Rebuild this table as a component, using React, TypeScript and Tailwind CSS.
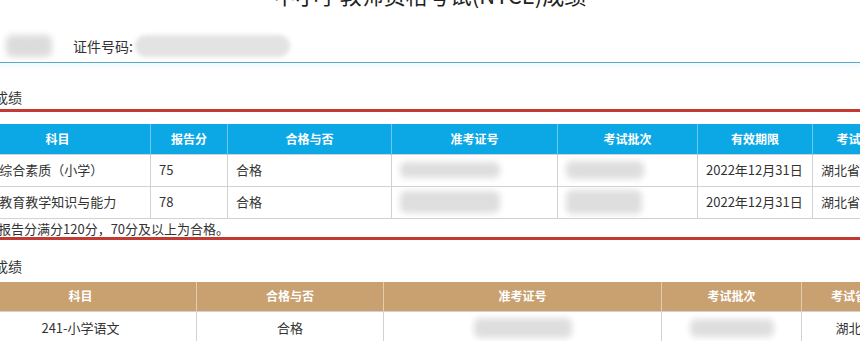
import React from "react";

type Cell = { text?: string; blur?: string };

const writtenCols = [186, 77, 164, 166, 140, 115, 96];
const writtenHead = ["科目", "报告分", "合格与否", "准考证号", "考试批次", "有效期限", "考试省份"];
const writtenRows: Cell[][] = [
  [
    { text: "201-综合素质（小学）" },
    { text: "75" },
    { text: "合格" },
    { blur: "w-[100px] h-[16px]" },
    { blur: "w-[78px] h-[18px]" },
    { text: "2022年12月31日" },
    { text: "湖北省" },
  ],
  [
    { text: "202-教育教学知识与能力" },
    { text: "78" },
    { text: "合格" },
    { blur: "w-[100px] h-[22px]" },
    { blur: "w-[76px] h-[24px]" },
    { text: "2022年12月31日" },
    { text: "湖北省" },
  ],
];

const interviewCols = [232, 187, 278, 140, 107];
const interviewHead = ["科目", "合格与否", "准考证号", "考试批次", "考试省份"];
const interviewRow: Cell[] = [
  { text: "241-小学语文" },
  { text: "合格" },
  { blur: "w-[98px] h-[20px]" },
  { blur: "w-[84px] h-[18px]" },
  { text: "湖北省" },
];

function Blurred({ size }: { size: string }) {
  return <div className={`${size} rounded-md bg-[#dedede] blur-[3px]`} />;
}

function ScoreTable({
  cols,
  head,
  rows,
  headBg,
  headLine,
  align,
}: {
  cols: number[];
  head: string[];
  rows: Cell[][];
  headBg: string;
  headLine: string;
  align: "left" | "center";
}) {
  return (
    <table className="w-[944px] table-fixed border-collapse">
      <colgroup>
        {cols.map((w, i) => (
          <col key={i} style={{ width: w }} />
        ))}
      </colgroup>
      <thead>
        <tr className={`h-[30px] ${headBg}`}>
          {head.map((h) => (
            <th
              key={h}
              className={`border-x ${headLine} overflow-hidden whitespace-nowrap p-0 text-center text-[12px] font-bold text-white`}
            >
              {h}
            </th>
          ))}
        </tr>
      </thead>
      <tbody>
        {rows.map((row, r) => (
          <tr key={r} className="h-[32px]">
            {row.map((c, i) => (
              <td
                key={i}
                className={`overflow-hidden whitespace-nowrap border border-[#d2d2d2] px-[8px] py-0 text-[13px] leading-[18px] text-[#333] ${
                  align === "center" ? "text-center" : "text-left"
                }`}
              >
                {c.blur ? (
                  <div className={align === "center" ? "flex justify-center" : "flex"}>
                    <Blurred size={c.blur} />
                  </div>
                ) : (
                  c.text
                )}
              </td>
            ))}
          </tr>
        ))}
      </tbody>
    </table>
  );
}

export default function App() {
  return (
    <div className="h-[341px] w-[860px] overflow-hidden bg-white font-['Noto_Sans_CJK_SC','Microsoft_YaHei',sans-serif] text-[#333]">
      {/* page title, scrolled partly out of view */}
      <h1 className="-mt-[17px] text-center text-[22px] leading-[22px] font-normal text-[#222]">
        中小学教师资格考试(NTCE)成绩
      </h1>

      {/* candidate info */}
      <div className="mt-[29px] flex h-[24px] items-center">
        <div className="ml-[6px] h-[22px] w-[46px] rounded-md bg-[#dcdcdc] blur-[3px]" />
        <span className="ml-[21px] text-[14px]">证件号码:</span>
        <div className="ml-[2px] h-[22px] w-[155px] rounded-full bg-[#e3e3e3] blur-[2px]" />
      </div>
      <div className="mt-[4px] h-px bg-[#5aa8c6]" />
      <div className="h-[7px] bg-gradient-to-b from-[#eefafd] to-white" />

      <div className="-ml-[36px] w-[944px]">
        <h2 className="mt-[17px] pl-[2px] text-[14px] leading-[20px] font-normal">笔试成绩</h2>

        <div className="mt-[2px] border-y-[3px] border-[#c43a33]">
          <div className="pt-[12px]">
            <ScoreTable
              cols={writtenCols}
              head={writtenHead}
              rows={writtenRows}
              headBg="bg-[#0ca8e6]"
              headLine="border-[#6cc9ee]"
              align="left"
            />
          </div>
          <p className="h-[18px] whitespace-nowrap pl-[8px] text-[13px] leading-[20px]">
            注：报告分满分120分，70分及以上为合格。
          </p>
        </div>

        <h2 className="mt-[16px] pl-[2px] text-[14px] leading-[20px] font-normal">面试成绩</h2>
        <div className="mt-[6px]">
          <ScoreTable
            cols={interviewCols}
            head={interviewHead}
            rows={[interviewRow]}
            headBg="bg-[#c9a171]"
            headLine="border-[#e3cdb2]"
            align="center"
          />
        </div>
      </div>
    </div>
  );
}
